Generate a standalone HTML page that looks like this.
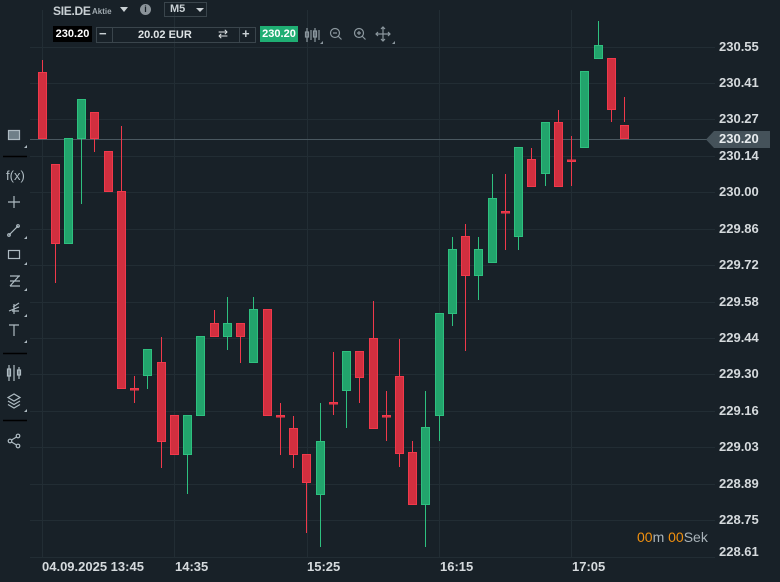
<!DOCTYPE html>
<html><head><meta charset="utf-8"><style>
body{margin:0;width:780px;height:582px;background:#182128;overflow:hidden;font-family:"Liberation Sans",sans-serif;position:relative}
.a{position:absolute}
.pl{position:absolute;left:719px;font-size:13px;font-weight:bold;color:#d5dadd;line-height:14px}
.tl{position:absolute;top:559px;font-size:13px;font-weight:bold;color:#d5dadd}
</style></head><body>
<svg class="a" style="left:0;top:0" width="780" height="582">
<g stroke="#222d34" stroke-width="1">
<line x1="30" x2="715" y1="47.5" y2="47.5"/><line x1="30" x2="715" y1="83.5" y2="83.5"/><line x1="30" x2="715" y1="119.5" y2="119.5"/><line x1="30" x2="715" y1="156.5" y2="156.5"/><line x1="30" x2="715" y1="192.5" y2="192.5"/><line x1="30" x2="715" y1="229.5" y2="229.5"/><line x1="30" x2="715" y1="265.5" y2="265.5"/><line x1="30" x2="715" y1="302.5" y2="302.5"/><line x1="30" x2="715" y1="338.5" y2="338.5"/><line x1="30" x2="715" y1="374.5" y2="374.5"/><line x1="30" x2="715" y1="411.5" y2="411.5"/><line x1="30" x2="715" y1="447.5" y2="447.5"/><line x1="30" x2="715" y1="484.5" y2="484.5"/><line x1="30" x2="715" y1="520.5" y2="520.5"/><line x1="30" x2="715" y1="557.5" y2="557.5"/>
<line x1="42.5" x2="42.5" y1="10" y2="557"/><line x1="174.5" x2="174.5" y1="10" y2="557"/><line x1="307.5" x2="307.5" y1="10" y2="557"/><line x1="439.5" x2="439.5" y1="10" y2="557"/><line x1="571.5" x2="571.5" y1="10" y2="557"/>
</g>
<line x1="30" x2="712" y1="139.5" y2="139.5" stroke="#4a5860" stroke-width="1"/>
<polygon points="706,139.5 714,131 770,131 770,148 714,148" fill="#45525a"/>
</svg>
<div class="pl" style="top:40px">230.55</div>
<div class="pl" style="top:76px">230.41</div>
<div class="pl" style="top:112px">230.27</div>
<div class="pl" style="top:132px;color:#e8ecee">230.20</div>
<div class="pl" style="top:149px">230.14</div>
<div class="pl" style="top:185px">230.00</div>
<div class="pl" style="top:222px">229.86</div>
<div class="pl" style="top:258px">229.72</div>
<div class="pl" style="top:295px">229.58</div>
<div class="pl" style="top:331px">229.44</div>
<div class="pl" style="top:367px">229.30</div>
<div class="pl" style="top:404px">229.16</div>
<div class="pl" style="top:440px">229.03</div>
<div class="pl" style="top:477px">228.89</div>
<div class="pl" style="top:513px">228.75</div>
<div class="pl" style="top:545px">228.61</div>
<div class="a" style="left:637px;top:529px;font-size:14px;color:#aab4ba"><span style="color:#f0900f">00</span>m <span style="color:#f0900f">00</span>Sek</div>
<div class="tl" style="left:42px">04.09.2025 13:45</div>
<div class="tl" style="left:175px">14:35</div>
<div class="tl" style="left:307px">15:25</div>
<div class="tl" style="left:440px">16:15</div>
<div class="tl" style="left:572px">17:05</div>
<!-- header -->
<div class="a" style="left:53px;top:4px;font-size:12px;font-weight:bold;color:#c9d0d4;letter-spacing:-0.3px">SIE.DE</div>
<div class="a" style="left:92px;top:7px;font-size:8px;font-weight:bold;color:#a0aab0">Aktie</div>
<div class="a" style="left:120px;top:7px;width:0;height:0;border-left:4px solid transparent;border-right:4px solid transparent;border-top:5px solid #c9d0d4"></div>
<div class="a" style="left:140px;top:4px;width:11px;height:11px;border-radius:50%;background:#8a9399;color:#182128;font-size:9px;font-weight:bold;text-align:center;line-height:11px">i</div>
<div class="a" style="left:164px;top:2px;width:43px;height:15px;border:1px solid #3a454c;box-sizing:border-box;font-size:11px;font-weight:bold;color:#c9d0d4;padding-left:5px;line-height:13px">M5</div>
<div class="a" style="left:196px;top:8px;width:0;height:0;border-left:4px solid transparent;border-right:4px solid transparent;border-top:4px solid #c9d0d4"></div>
<div class="a" style="left:53px;top:26px;width:39px;height:16px;background:#000;color:#fff;font-size:11px;font-weight:bold;text-align:center;line-height:16px">230.20</div>
<div class="a" style="left:96px;top:27px;width:160px;height:16px;border:1px solid #3a454c;box-sizing:border-box"></div>
<div class="a" style="left:112px;top:27px;width:1px;height:16px;background:#3a454c"></div>
<div class="a" style="left:239px;top:27px;width:1px;height:16px;background:#3a454c"></div>
<div class="a" style="left:99px;top:26px;font-size:13px;color:#c9d0d4;font-weight:bold">−</div>
<div class="a" style="left:242px;top:26px;font-size:13px;color:#c9d0d4;font-weight:bold">+</div>
<div class="a" style="left:138px;top:29px;font-size:11px;font-weight:bold;color:#dfe4e6">20.02 EUR</div>
<div class="a" style="left:218px;top:27px;font-size:12px;color:#dfe4e6">⇄</div>
<div class="a" style="left:260px;top:26px;width:38px;height:16px;background:#1fae73;color:#fff;font-size:11px;font-weight:bold;text-align:center;line-height:16px">230.20</div>
<svg class="a" style="left:304px;top:25px" width="95" height="20" fill="none" stroke="#8b979e" stroke-width="1.2">
<path d="M3 3v14M7 5v10M11 3v14M15 5v10"/><rect x="1.5" y="7" width="3" height="5"/><rect x="9.5" y="6" width="3" height="6"/>
<path d="M16 19h3v-3z" fill="#8b979e" stroke="none"/>
<circle cx="31" cy="8" r="4.5"/><path d="M34 11l3.5 3.5M29 8h4"/>
<circle cx="55" cy="8" r="4.5"/><path d="M58 11l3.5 3.5M53 8h4M55 6v4"/>
<path d="M79 2v14M72 9h14M77 4l2-2 2 2M77 14l2 2 2-2M74 7l-2 2 2 2M84 7l2 2-2 2"/>
<path d="M88 19h3v-3z" fill="#8b979e" stroke="none"/>
</svg>
<!-- left toolbar -->
<svg class="a" style="left:0;top:120px" width="30" height="340" fill="none" stroke="#aebbc2" stroke-width="1.2">
<rect x="8.5" y="10.5" width="11" height="9" fill="#6f7f88"/>
<line x1="3" x2="27" y1="36.5" y2="36.5" stroke="#000" stroke-width="1.5"/>
<path d="M8 82h12M14 76v12"/>
<path d="M9 115l9-9"/><circle cx="9" cy="115" r="1.3"/><circle cx="18" cy="106" r="1.3"/>
<rect x="8.5" y="130.5" width="11" height="8"/>
<path d="M10 156h10M10 161h10M10 166h10M10 166l9-10"/>
<path d="M9 191l10-4M12 191l7 0M13 187l6-4M14 184l0 10"/>
<path d="M9 205h10M14 205v11"/>
<line x1="3" x2="27" y1="233.5" y2="233.5" stroke="#000" stroke-width="1.5"/>
<path d="M9 245v16M14 245v16M19 247v12"/><rect x="7.5" y="249" width="3" height="7"/><rect x="17.5" y="250" width="3" height="5"/>
<path d="M14 274l-6 3.5 6 3.5 6-3.5zM8 281l6 3.5 6-3.5M8 284.5l6 3.5 6-3.5"/>
<line x1="3" x2="27" y1="300.5" y2="300.5" stroke="#000" stroke-width="1.5"/>
<circle cx="10" cy="321" r="1.8"/><circle cx="18" cy="316" r="1.8"/><circle cx="18" cy="326" r="1.8"/><path d="M11.5 320l5-3M11.5 322l5 3"/>
<g fill="#aebbc2" stroke="none">
<path d="M24 28h3v-3z"/><path d="M24 119h3v-3z"/><path d="M24 145h3v-3z"/><path d="M24 171h3v-3z"/><path d="M24 197h3v-3z"/><path d="M24 223h3v-3z"/><path d="M24 292h3v-3z"/>
</g>
</svg>
<div class="a" style="left:6px;top:168px;font-size:13px;color:#aebbc2">f(x)</div>
<svg class="a" style="left:0;top:0" width="780" height="582">
<g stroke-width="1">
<g stroke="#f0394b" fill="#d12f3f">
<line x1="42.5" x2="42.5" y1="60" y2="72"/><rect x="38.5" y="72.5" width="8" height="66"/>
<line x1="55.5" x2="55.5" y1="244" y2="283"/><rect x="51.5" y="164.5" width="8" height="79"/>
<line x1="94.5" x2="94.5" y1="139" y2="152"/><rect x="90.5" y="112.5" width="8" height="26"/>
<rect x="104.5" y="151.5" width="8" height="40"/>
<line x1="121.5" x2="121.5" y1="126" y2="191"/><rect x="117.5" y="191.5" width="8" height="197"/>
<line x1="134.5" x2="134.5" y1="376" y2="403"/><rect x="130.5" y="388.5" width="8" height="1.5"/>
<line x1="161.5" x2="161.5" y1="337" y2="468"/><rect x="157.5" y="362.5" width="8" height="79"/>
<rect x="170.5" y="415.5" width="8" height="39"/>
<line x1="214.5" x2="214.5" y1="310" y2="323"/><rect x="210.5" y="323.5" width="8" height="13"/>
<line x1="240.5" x2="240.5" y1="337" y2="363"/><rect x="236.5" y="323.5" width="8" height="13"/>
<rect x="263.5" y="309.5" width="8" height="106"/>
<line x1="280.5" x2="280.5" y1="403" y2="455"/><rect x="276.5" y="415.5" width="8" height="1.5"/>
<line x1="293.5" x2="293.5" y1="416" y2="468"/><rect x="289.5" y="428.5" width="8" height="26"/>
<line x1="306.5" x2="306.5" y1="483" y2="533"/><rect x="302.5" y="454.5" width="8" height="28"/>
<line x1="333.5" x2="333.5" y1="352" y2="415"/><rect x="329.5" y="402.5" width="8" height="1.5"/>
<line x1="359.5" x2="359.5" y1="378" y2="403"/><rect x="355.5" y="351.5" width="8" height="26"/>
<line x1="373.5" x2="373.5" y1="301" y2="338"/><rect x="369.5" y="338.5" width="8" height="90"/>
<line x1="386.5" x2="386.5" y1="391" y2="441"/><rect x="382.5" y="415.5" width="8" height="1.5"/>
<line x1="399.5" x2="399.5" y1="339" y2="467"/><rect x="395.5" y="376.5" width="8" height="77"/>
<line x1="412.5" x2="412.5" y1="441" y2="452"/><rect x="408.5" y="452.5" width="8" height="52"/>
<line x1="465.5" x2="465.5" y1="224" y2="351"/><rect x="461.5" y="236.5" width="8" height="39"/>
<line x1="505.5" x2="505.5" y1="174" y2="250"/><rect x="501.5" y="211.5" width="8" height="1.5"/>
<line x1="531.5" x2="531.5" y1="148" y2="159"/><rect x="527.5" y="159.5" width="8" height="27"/>
<line x1="558.5" x2="558.5" y1="110" y2="122"/><rect x="554.5" y="122.5" width="8" height="64"/>
<line x1="571.5" x2="571.5" y1="136" y2="186"/><rect x="567.5" y="160" width="8" height="1.5"/>
<line x1="611.5" x2="611.5" y1="110" y2="122"/><rect x="607.5" y="58.5" width="8" height="51"/>
<line x1="624.5" x2="624.5" y1="97" y2="122"/><rect x="620.5" y="125.5" width="8" height="13"/>
</g>
<g stroke="#2ec07f" fill="#22a46c">
<rect x="64.5" y="138.5" width="8" height="105"/>
<line x1="81.5" x2="81.5" y1="139" y2="204"/><rect x="77.5" y="99.5" width="8" height="39"/>
<line x1="147.5" x2="147.5" y1="376" y2="389"/><rect x="143.5" y="349.5" width="8" height="26"/>
<line x1="187.5" x2="187.5" y1="455" y2="494"/><rect x="183.5" y="415.5" width="8" height="39"/>
<rect x="196.5" y="336.5" width="8" height="79"/>
<line x1="227.5" x2="227.5" y1="297" y2="350"/><rect x="223.5" y="323.5" width="8" height="13"/>
<line x1="253.5" x2="253.5" y1="297" y2="309"/><rect x="249.5" y="309.5" width="8" height="53"/>
<line x1="320.5" x2="320.5" y1="403" y2="547"/><rect x="316.5" y="441.5" width="8" height="53"/>
<line x1="346.5" x2="346.5" y1="391" y2="428"/><rect x="342.5" y="351.5" width="8" height="39"/>
<line x1="425.5" x2="425.5" y1="391" y2="547"/><rect x="421.5" y="427.5" width="8" height="77"/>
<line x1="439.5" x2="439.5" y1="416" y2="441"/><rect x="435.5" y="313.5" width="8" height="102"/>
<line x1="452.5" x2="452.5" y1="237" y2="326"/><rect x="448.5" y="249.5" width="8" height="64"/>
<line x1="478.5" x2="478.5" y1="237" y2="300"/><rect x="474.5" y="249.5" width="8" height="26"/>
<line x1="492.5" x2="492.5" y1="174" y2="198"/><rect x="488.5" y="198.5" width="8" height="64"/>
<line x1="518.5" x2="518.5" y1="237" y2="250"/><rect x="514.5" y="147.5" width="8" height="89"/>
<line x1="545.5" x2="545.5" y1="174" y2="186"/><rect x="541.5" y="122.5" width="8" height="51"/>
<rect x="580.5" y="71.5" width="8" height="76"/>
<line x1="598.5" x2="598.5" y1="21" y2="45"/><rect x="594.5" y="45.5" width="8" height="13"/>
</g>
</g>
</svg>
</body></html>
